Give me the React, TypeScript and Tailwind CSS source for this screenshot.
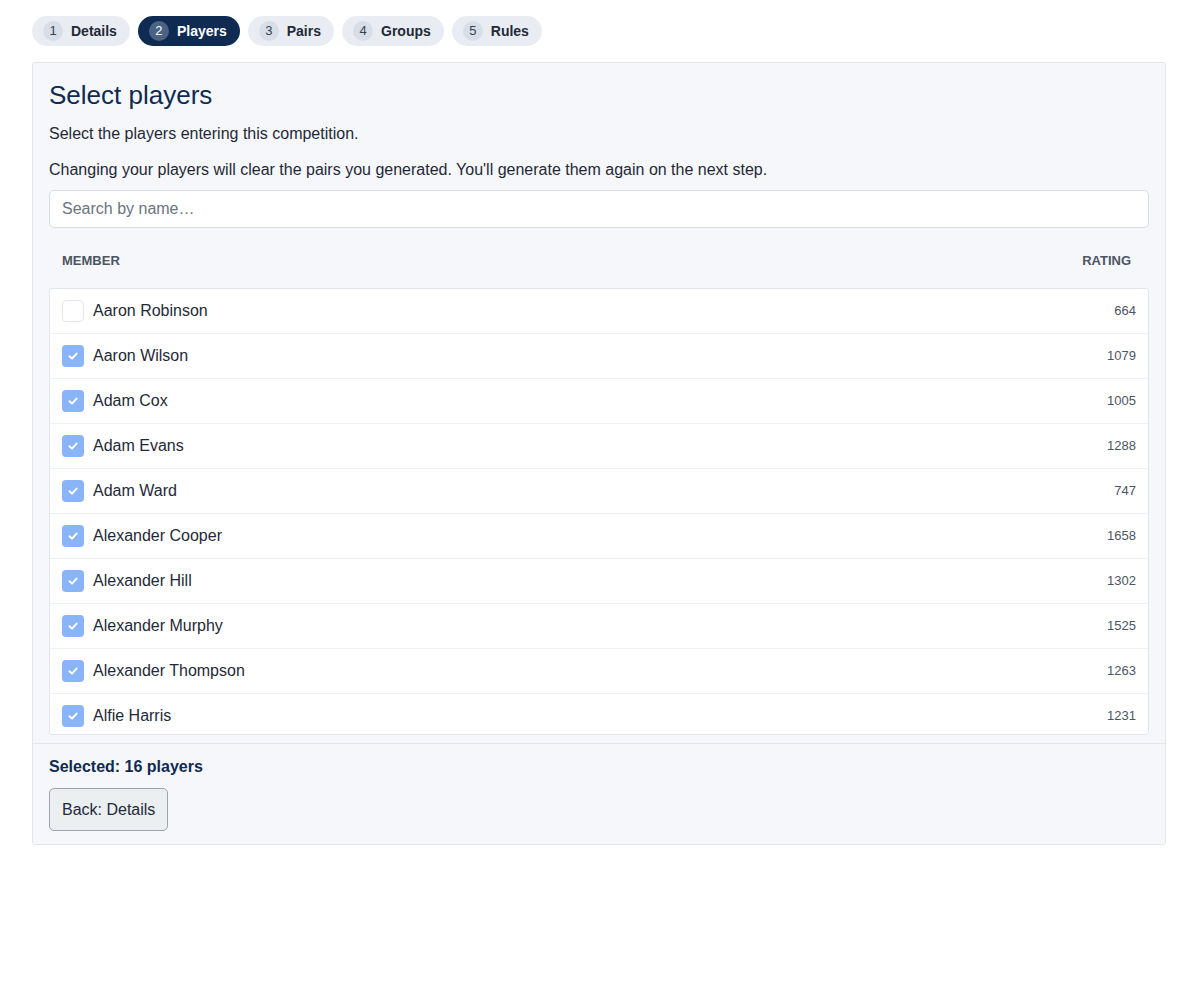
import React from "react";

const steps = [["1","Details"],["2","Players"],["3","Pairs"],["4","Groups"],["5","Rules"]];
const players: [string, number, boolean][] = [
  ["Aaron Robinson",664,false],["Aaron Wilson",1079,true],["Adam Cox",1005,true],["Adam Evans",1288,true],
  ["Adam Ward",747,true],["Alexander Cooper",1658,true],["Alexander Hill",1302,true],["Alexander Murphy",1525,true],
  ["Alexander Thompson",1263,true],["Alfie Harris",1231,true],["Ben Clarke",1100,true],
];

export default function App() {
  return (
    <div className="min-h-[1000px] bg-white pl-8 pr-6 pt-4 text-[#1f2937]" style={{fontFamily:'"Liberation Sans", Arial, sans-serif'}}>
      <div className="flex gap-2">
        {steps.map(([n,l],i)=>{
          const active = i===1;
          return (
            <div key={n} className={`flex h-[30px] items-center gap-2 rounded-full pl-[11px] pr-[13px] text-[14px] font-bold ${active?"bg-[#0f2b52] text-white":"bg-[#e9edf3] text-[#1f2937]"}`}>
              <span className={`flex h-5 w-5 items-center justify-center rounded-full text-[13px] font-normal ${active?"bg-[#4a6285] text-white":"bg-[#d8dee8] text-[#374151]"}`}>{n}</span>
              {l}
            </div>
          );
        })}
      </div>
      <div className="mt-4 rounded-[3px] border border-[#e2e6ec] bg-[#f6f7fa]">
        <div className="px-4 pt-[15px]">
          <h1 className="text-[26px] leading-[34px] text-[#0f2b52]">Select players</h1>
          <p className="mt-[10px] text-[16px] leading-[24px] text-[#1f2937]">Select the players entering this competition.</p>
          <p className="mt-[12px] text-[16px] leading-[24px] text-[#1f2937]">Changing your players will clear the pairs you generated. You'll generate them again on the next step.</p>
          <div className="mt-[8px] flex h-[38px] items-center rounded-[5px] border border-[#d9dee5] bg-white px-3 text-[16px] text-[#6b7280]">Search by name…</div>
          <div className="flex h-[60px] items-center justify-between px-[13px] pt-[6px] text-[13px] font-bold text-[#4b5563]">
            <span>MEMBER</span><span className="pr-[5px]">RATING</span>
          </div>
          <div className="h-[447px] overflow-hidden rounded-[3px] border border-[#e2e6ec] bg-white">
            {players.map(([name,r,c])=>(
              <div key={name} className="flex h-[45px] shrink-0 items-center border-b border-[#eef0f3] pl-3 pr-3">
                {c ? (
                  <span className="flex h-[22px] w-[22px] items-center justify-center rounded-[4px] bg-[#8ab4f8]">
                    <svg width="12" height="12" viewBox="0 0 12 12"><path d="M2.5 6.2 L5 8.6 L9.6 3.6" fill="none" stroke="white" strokeWidth="2" strokeLinecap="round" strokeLinejoin="round"/></svg>
                  </span>
                ) : (
                  <span className="h-[22px] w-[22px] rounded-[4px] border border-[#e5e7eb] bg-white"/>
                )}
                <span className="ml-[9px] text-[16px] text-[#1f2937]">{name}</span>
                <span className="ml-auto text-[13px] text-[#4b5563]">{r}</span>
              </div>
            ))}
          </div>
        </div>
        <div className="mt-2 border-t border-[#e2e6ec] px-4 pt-[14px] pb-[13px]">
          <div className="text-[16px] leading-[18px] font-bold text-[#0f2b52]">Selected: 16 players</div>
          <button className="mt-[12px] h-[43px] rounded-[5px] border border-[#9ca3af] bg-[#eceff2] px-3 text-[16px] text-[#1f2937]">Back: Details</button>
        </div>
      </div>
    </div>
  );
}
